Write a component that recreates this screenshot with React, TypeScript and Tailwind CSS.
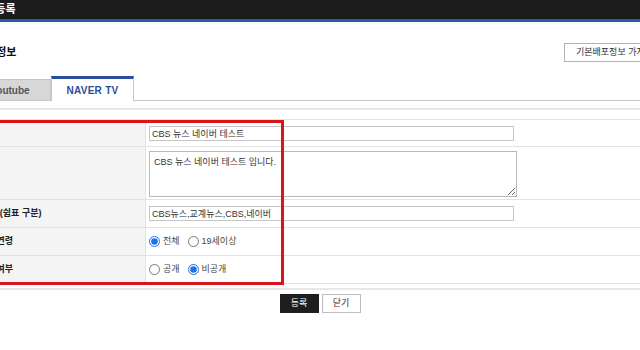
import React from "react";

function TextRow({ label, value, tall }: { label: string; value: string; tall?: boolean }) {
  return (
    <div className={`grid grid-cols-[186px_1fr] border-b border-[#e2e2e2] ${tall ? "h-[53px]" : "h-[28px]"}`}>
      <div className="bg-[#f4f4f4] border-r border-[#e2e2e2] pl-[15px] flex items-center text-[9px] font-bold text-[#222]">
        {label}
      </div>
      {tall ? (
        <div className="pl-[3px] pt-[4px]">
          <textarea
            readOnly
            defaultValue={value}
            className="block w-[368px] h-[46px] border border-[#b8b8b8] px-[4px] py-[4px] text-[9px] leading-[12px] text-[#333] outline-none"
          />
        </div>
      ) : (
        <div className="pl-[3px] flex items-center">
          <input
            readOnly
            value={value}
            className="w-[365px] h-[15px] border border-[#c6c6c6] px-[2px] text-[9px] text-[#333] outline-none"
          />
        </div>
      )}
    </div>
  );
}

function RadioRow({ label, options, checked }: { label: string; options: string[]; checked: number }) {
  return (
    <div className="grid grid-cols-[186px_1fr] border-b border-[#e2e2e2] h-[28px]">
      <div className="bg-[#f4f4f4] border-r border-[#e2e2e2] pl-[20px] flex items-center text-[9px] font-bold text-[#222]">
        {label}
      </div>
      <div className="pl-[3px] flex items-center gap-[8px] text-[9px] text-[#444]">
        {options.map((o, i) => (
          <label key={o} className="flex items-center gap-[3px]">
            <input
              type="radio"
              name={label}
              defaultChecked={i === checked}
              className="m-0 w-[11px] h-[11px] accent-[#1f6fe5]"
            />
            {o}
          </label>
        ))}
      </div>
    </div>
  );
}

export default function App() {
  return (
    <div className="relative w-[640px] h-[350px] overflow-hidden bg-white text-[#333] font-['Liberation_Sans','Noto_Sans_CJK_KR',sans-serif]">
      <div className="ml-[-40px] w-[720px]">
        <div className="h-[22px] bg-[#1c1c1c] border-b-[3px] border-[#2d5aa8] pl-[12px] flex items-center text-white text-[11px] font-bold leading-none">
          영상 등록
        </div>

        <div className="mt-[21px] h-[19px] flex items-center">
          <div className="w-[604px] shrink-0 pl-[16px] text-[11px] font-bold text-[#111]">배포정보</div>
          <button className="h-[19px] px-[11px] border border-[#b3b3b3] bg-white text-[9px] text-[#333] whitespace-nowrap">
            기본배포정보 가져오기
          </button>
        </div>

        <div className="mt-[14px] h-[25px] flex items-end border-b border-[#c8c8c8] pl-[9px]">
          <div className="w-[82px] h-[21px] bg-[#d7d7d7] border border-b-0 border-[#c4c4c4] flex items-center justify-center text-[10px] font-bold text-[#555]">
            Youtube
          </div>
          <div className="w-[83px] h-[25px] mb-[-1px] bg-white border-x border-[#c8c8c8] border-t-[3px] border-t-[#2a4f9e] flex items-center justify-center text-[10px] font-bold text-[#2b4d9a] tracking-[0.3px]">
            NAVER TV
          </div>
        </div>

        <div className="mt-[7px] h-[2px] bg-[#e8e8e8]" />

        <div className="mt-[9px] border-t border-[#e2e2e2]">
          <div className="h-[27px] grid grid-cols-[186px_1fr] border-b border-[#e2e2e2]">
            <div className="bg-[#f4f4f4] border-r border-[#e2e2e2] pl-[15px] flex items-center text-[9px] font-bold text-[#222]">
              제목
            </div>
            <div className="pl-[3px] flex items-center">
              <input
                readOnly
                value="CBS 뉴스 네이버 테스트"
                className="w-[365px] h-[15px] border border-[#c6c6c6] px-[2px] text-[9px] text-[#333] outline-none"
              />
            </div>
          </div>
          <TextRow label="설명" value="CBS 뉴스 네이버 테스트 입니다." tall />
          <TextRow label="키워드(쉼표 구분)" value="CBS뉴스,교계뉴스,CBS,네이버" />
          <RadioRow label="시청연령" options={["전체", "19세이상"]} checked={0} />
          <RadioRow label="공개여부" options={["공개", "비공개"]} checked={1} />
        </div>

        <div className="mt-[4px] h-[2px] bg-[#e8e8e8]" />

        <div className="mt-[4px] flex justify-center gap-[3px]">
          <button className="w-[39px] h-[19px] bg-[#1e1e1e] text-white text-[9px]">등록</button>
          <button className="w-[39px] h-[19px] bg-white border border-[#bdbdbd] text-[#333] text-[9px]">닫기</button>
        </div>
      </div>

      <div className="absolute left-[-10px] top-[120px] w-[294px] h-[165px] border-[3px] border-[#d9141b]" />
    </div>
  );
}
